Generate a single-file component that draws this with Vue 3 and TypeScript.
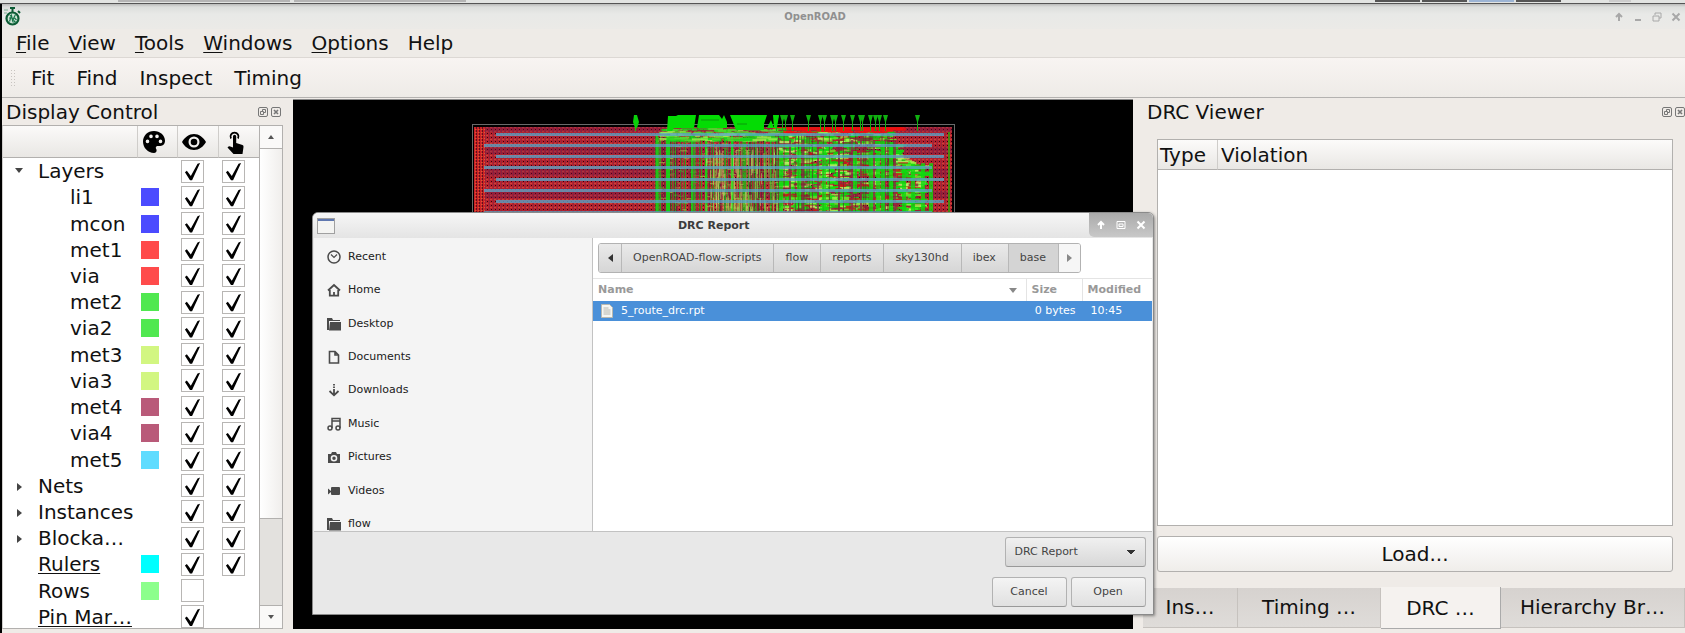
<script setup lang="ts">
import { ref } from 'vue'

interface TreeRow {
  name: string
  level: 0 | 1
  arrow?: 'open' | 'closed'
  color?: string
  underline?: boolean
  visible: boolean
  selectable?: boolean
}

const rows = ref<TreeRow[]>([
  { name: 'Layers', level: 0, arrow: 'open', visible: true, selectable: true },
  { name: 'li1', level: 1, color: '#4b4bff', visible: true, selectable: true },
  { name: 'mcon', level: 1, color: '#4b4bff', visible: true, selectable: true },
  { name: 'met1', level: 1, color: '#ff4b4b', visible: true, selectable: true },
  { name: 'via', level: 1, color: '#ff4b4b', visible: true, selectable: true },
  { name: 'met2', level: 1, color: '#50e850', visible: true, selectable: true },
  { name: 'via2', level: 1, color: '#50e850', visible: true, selectable: true },
  { name: 'met3', level: 1, color: '#d2f681', visible: true, selectable: true },
  { name: 'via3', level: 1, color: '#d2f681', visible: true, selectable: true },
  { name: 'met4', level: 1, color: '#b95a79', visible: true, selectable: true },
  { name: 'via4', level: 1, color: '#b95a79', visible: true, selectable: true },
  { name: 'met5', level: 1, color: '#5fdcff', visible: true, selectable: true },
  { name: 'Nets', level: 0, arrow: 'closed', visible: true, selectable: true },
  { name: 'Instances', level: 0, arrow: 'closed', visible: true, selectable: true },
  { name: 'Blocka…', level: 0, arrow: 'closed', visible: true, selectable: true },
  { name: 'Rulers', level: 0, color: '#00ffff', underline: true, visible: true, selectable: true },
  { name: 'Rows', level: 0, color: '#8cff8c', visible: false },
  { name: 'Pin Mar…', level: 0, underline: true, visible: true },
])

const menus = ['File', 'View', 'Tools', 'Windows', 'Options']
const tools = ['Fit', 'Find', 'Inspect', 'Timing']
const places = ['Recent', 'Home', 'Desktop', 'Documents', 'Downloads', 'Music', 'Pictures', 'Videos', 'flow']
const crumbs = ['OpenROAD-flow-scripts', 'flow', 'reports', 'sky130hd', 'ibex', 'base']
const tabs = [
  { label: 'Ins…', cls: 'w1' },
  { label: 'Timing …', cls: 'w2' },
  { label: 'DRC …', cls: 'w3' },
  { label: 'Hierarchy Br…', cls: 'w4' },
]
const activeTab = ref(2)

interface Shape { x: number; y: number; w: number; h: number; c: string; o: number }

let seed = 9157
function rnd(): number {
  seed = (seed * 16807) % 2147483647
  return seed / 2147483647
}
function pick<T>(list: T[]): T {
  return list[Math.floor(rnd() * list.length)]
}

// Routing shapes: thin vertical tracks and short horizontal segments.
const shapes: Shape[] = []
function add(x: number, y: number, w: number, h: number, c: string, o = 1) {
  shapes.push({ x, y, w, h, c, o })
}
const top = 27
const bottom = 124
// dense left block
for (let x = 362; x < 490; x += 1) {
  const r = rnd()
  if (r < 0.34) add(x, top + 4 + rnd() * 8, 1, bottom, pick(['#1f9a20', '#12c812', '#4a8a2c']), 0.75)
  else if (r < 0.5) add(x, top + 8, 1, bottom, '#5c2030', 0.7)
}
for (let i = 0; i < 420; i++) {
  add(362 + rnd() * 128, top + 3 + rnd() * 92, 2 + rnd() * 5, 1, pick(['#6f7a30', '#8a3a3a', '#a8c04a', '#4aa030', '#a84838']), 0.7)
}
for (const x of [363, 373, 375, 398, 412, 438]) add(x, top + 8, 2, bottom, '#12dc12', 0.85)
for (let i = 0; i < 140; i++) add(366 + rnd() * 118, top + 1 + rnd() * 12, 4 + rnd() * 12, 2, pick(['#58d830', '#a4ec50', '#18d818']), 0.75)
// yellow-green columns
for (let i = 0; i < 170; i++) add(412 + rnd() * 90, top + 18 + rnd() * 70, 1, 8 + rnd() * 22, pick(['#a8d850', '#c6e070', '#7ab83c']), 0.65)
// routed centre and right block, its upper corner falling away to the right
for (let i = 0; i < 1500; i++) {
  const x = 484 + rnd() * 144
  const limit = x > 605 ? 58 + (x - 605) * 0.2 : x > 595 ? 44 : 31
  const y = limit + rnd() * 84
  add(x, y, 3 + rnd() * 10, 1 + rnd() * 2, pick(['#0fe00f', '#0fe00f', '#10c810', '#10d810', '#9cf046', '#c0f068', '#66e028', '#8a2838', '#c81818']), 0.85)
}
for (const x of [496, 509, 524, 545, 558, 567, 580, 591, 601]) add(x, 40, 2, bottom, '#8c2a44', 0.8)
for (let i = 0; i < 26; i++) add(484 + rnd() * 120, 34, 1, bottom, '#6c2430', 0.7)
for (const x of [486, 504, 529, 560, 576, 583]) add(x, 36 + rnd() * 16, 4, 40 + rnd() * 30, '#10dc10', 0.75)
for (let i = 0; i < 50; i++) add(490 + rnd() * 115, 27 + rnd() * 5, 5 + rnd() * 10, 2, '#f01010', 0.8)
for (const x of [588, 596, 609, 618, 628, 636]) add(x, (x > 605 ? 60 : 40) + rnd() * 10, 4, bottom, '#0fd80f', 0.8)

const straps = Array.from({ length: 8 }, (_, i) => ({
  x: i % 2 === 0 ? 203 : 191,
  w: 448,
  y: 34 + Math.round(i * 11.15),
}))

const pins = [483, 489, 492, 499, 515, 527, 531, 539, 542, 550, 559, 567, 569, 577, 582, 586, 592, 624]
const pinBlocks = [
  'M375 16h8l2-1h18l-2 13h-20l-2 3h-5z',
  'M406 15h20l3 4 2-4 3 7v6h-30z',
  'M437 15h37l-3 9v6h-28z',
  'M474 28l4-8 3 8z',
  'M480 15h6l-2 13h-3z',
]
</script>

<template>
  <div class="desktop">
    <div class="taskbar"><i class="t1"></i><i class="t2"></i><i class="gap"></i><i class="d"></i><i class="d"></i><i class="d sel"></i><i class="d"></i><i class="end"></i></div>
    <main class="window">
      <header class="titlebar">
        <svg class="logo" width="18" height="22" viewBox="0 0 18 22" aria-hidden="true">
          <circle cx="9.500" cy="12.500" r="6" fill="#cfe4d6" stroke="#0c5c35" stroke-width="2.200" />
          <path d="M7 2h5M9.500 2v4M15 5l2 2" stroke="#0c5c35" stroke-width="2" fill="none" />
          <path d="M1 4h4M1 7h3" stroke="#7fb095" stroke-width="1" fill="none" />
          <path d="M6.500 15.500l2-6 1 5 3-6M6 12h3M9.500 16h4M11.500 12l2 2M7 9l5 7" stroke="#17764a" stroke-width="1.200" fill="none" />
        </svg>
        <h1>OpenROAD</h1>
        <div class="wm">
          <button aria-label="Shade"><svg width="10" height="10" viewBox="0 0 10 10"><path d="M5 9V2M2 5l3-3 3 3" /></svg></button>
          <button aria-label="Minimize"><svg width="10" height="10" viewBox="0 0 10 10"><path d="M2 8h6" /></svg></button>
          <button aria-label="Restore"><svg width="10" height="10" viewBox="0 0 10 10"><path d="M3 3V1h6v5H7M1 4h6v5H1z" stroke-width="1" /></svg></button>
          <button aria-label="Close"><svg width="10" height="10" viewBox="0 0 10 10"><path d="M1.500 1.500l7 7M8.500 1.500l-7 7" /></svg></button>
        </div>
      </header>
      <nav class="menubar">
        <button v-for="m in menus" :key="m"><u>{{ m[0] }}</u>{{ m.slice(1) }}</button>
        <button>Help</button>
      </nav>
      <div class="toolbar">
        <span class="grip"></span>
        <button v-for="t in tools" :key="t">{{ t }}</button>
      </div>

      <div class="work">
        <section class="dock left">
          <div class="dock-title">
            <h2>Display Control</h2>
            <button aria-label="Float Display Control"><svg width="10" height="10" viewBox="0 0 10 10"><rect x=".5" y=".5" width="9" height="9" rx="1.500" /><path d="M4.500 4.500v-2h3v3h-2M2.500 4.500h3v3h-3z" /></svg></button>
            <button aria-label="Close Display Control"><svg width="10" height="10" viewBox="0 0 10 10"><rect x=".5" y=".5" width="9" height="9" rx="1.500" /><path d="M3 3l4 4M7 3l-4 4" stroke-width="1.600" /></svg></button>
          </div>
          <div class="tree">
            <div class="tree-view">
              <table>
                <colgroup><col class="c-name" /><col class="c-color" /><col class="c-check" /><col class="c-color" /></colgroup>
                <thead>
                  <tr>
                    <th></th>
                    <th>
                      <svg width="24" height="24" viewBox="0 0 24 24" role="img" aria-label="Color"><path fill-rule="evenodd" d="M12 1C5.500 1 1 5.800 1 11.500 1 17.800 6 23 12 23c1.600 0 2.600-1.100 2.600-2.500 0-1.300-.8-1.700-.8-2.700 0-1.200.9-1.800 2.100-1.800h2.400c2.900 0 4.700-2.300 4.700-5.200C23 5.300 18 1 12 1zM5.500 13.200a1.800 1.800 0 1 1 0-3.600 1.800 1.800 0 0 1 0 3.600zM9 8.200a1.800 1.800 0 1 1 0-3.600 1.800 1.800 0 0 1 0 3.600zM15 8.200a1.800 1.800 0 1 1 0-3.600 1.800 1.800 0 0 1 0 3.600zM18.500 13.200a1.800 1.800 0 1 1 0-3.600 1.800 1.800 0 0 1 0 3.600z" /></svg>
                    </th>
                    <th>
                      <svg width="24" height="24" viewBox="0 0 24 24" role="img" aria-label="Visible"><path fill-rule="evenodd" d="M12 4C7 4 2.700 7.300 0 12c2.700 4.900 7 8 12 8s9.300-3.100 12-8c-2.700-4.700-7-8-12-8zm0 13.500a5.500 5.500 0 1 1 0-11 5.500 5.500 0 0 1 0 11z" /><circle cx="12" cy="12" r="3.300" /></svg>
                    </th>
                    <th>
                      <svg width="24" height="24" viewBox="0 0 24 24" role="img" aria-label="Selectable"><path d="M8 8.500a4 4 0 1 1 7 0" fill="none" stroke="#000" stroke-width="1.800" /><path d="M10 6.500q0-1.700 1.600-1.700t1.600 1.700V13l6.300 2q1.300.6 1 2L19.500 24H10.500L4.500 17.500q1.500-1.800 3.500-.8l2 .8z" /></svg>
                    </th>
                  </tr>
                </thead>
                <tbody>
                  <tr v-for="row in rows" :key="row.name">
                    <td :class="['name', 'l' + row.level, row.arrow]"><span :class="{ under: row.underline }">{{ row.name }}</span></td>
                    <td class="swatch"><svg v-if="row.color" width="18" height="18" viewBox="0 0 18 18" aria-hidden="true"><rect width="18" height="18" :fill="row.color" /></svg></td>
                    <td class="chk"><input v-model="row.visible" type="checkbox" :aria-label="row.name + ' visible'" /></td>
                    <td class="chk"><input v-if="row.selectable !== undefined" v-model="row.selectable" type="checkbox" :aria-label="row.name + ' selectable'" /></td>
                  </tr>
                </tbody>
              </table>
            </div>
            <div class="scrollbar">
              <button class="up" aria-label="Scroll up"></button>
              <div class="thumb"></div>
              <div class="track"></div>
              <button class="down" aria-label="Scroll down"></button>
            </div>
          </div>
        </section>

        <section class="canvas" aria-label="Layout">
          <svg viewBox="0 0 840 530" preserveAspectRatio="xMidYMin slice">
            <defs>
              <pattern id="mesh" width="4" height="4" patternUnits="userSpaceOnUse">
                <rect width="4" height="4" fill="#b8202e" />
                <rect width="1" height="4" fill="#96283c" />
                <rect x="2" y="1" width="1" height="1" fill="#30060c" />
                <rect x="1" y="3" width="2" height="1" fill="#cc4438" />
              </pattern>
              <pattern id="edge" width="3" height="3" patternUnits="userSpaceOnUse">
                <rect width="3" height="3" fill="#cc2228" />
                <rect width="1" height="2" fill="#5c141c" />
                <rect x="2" y="2" width="1" height="1" fill="#d86030" />
              </pattern>
              <pattern id="row" width="8" height="22" patternUnits="userSpaceOnUse">
                <rect y="3" width="8" height="7" fill="#60184c" opacity=".3" />
              </pattern>
            </defs>
            <rect x="179.500" y="24.500" width="482" height="440" fill="#000" stroke="#6a6a6a" stroke-width="1" />
            <rect x="181" y="27" width="478" height="436" fill="url(#mesh)" />
            <rect x="181" y="27" width="478" height="436" fill="url(#row)" />
            <rect x="181" y="27" width="11" height="436" fill="url(#edge)" />
            <rect x="480" y="27" width="130" height="3" fill="#e01414" />
            <rect v-for="(s, i) in shapes" :key="i" :x="s.x" :y="s.y" :width="s.w" :height="s.h" :fill="s.c" :opacity="s.o" />
            <rect x="655" y="32" width="2" height="430" fill="#4a8a10" />
            <rect v-for="s in straps" :key="s.y" :x="s.x" :y="s.y - 1" :width="s.w" height="3" fill="#58a8cc" opacity=".75" />
            <path v-for="p in pins" :key="p" :d="`M${p - 2} 15h5l-2 7v9h-1v-9z`" fill="#10b010" />
            <path v-for="b in pinBlocks" :key="b" :d="b" fill="#04dc04" />
            <path d="M341 15h3l2 7-2 6h-1v3h-1v-3l-2-6z" fill="#0ad00a" />
            <path d="M408 20h18M444 24h10" stroke="#0a9a0a" />
          </svg>
        </section>

        <section class="dock right">
          <div class="dock-title">
            <h2>DRC Viewer</h2>
            <button aria-label="Float DRC Viewer"><svg width="10" height="10" viewBox="0 0 10 10"><rect x=".5" y=".5" width="9" height="9" rx="1.500" /><path d="M4.500 4.500v-2h3v3h-2M2.500 4.500h3v3h-3z" /></svg></button>
            <button aria-label="Close DRC Viewer"><svg width="10" height="10" viewBox="0 0 10 10"><rect x=".5" y=".5" width="9" height="9" rx="1.500" /><path d="M3 3l4 4M7 3l-4 4" stroke-width="1.600" /></svg></button>
          </div>
          <div class="viewer">
            <div class="violations">
              <table><thead><tr><th class="type">Type</th><th>Violation</th></tr></thead></table>
            </div>
            <button class="load">Load...</button>
          </div>
          <div class="tabs" role="tablist">
            <button v-for="(t, i) in tabs" :key="t.label" role="tab" :aria-selected="i === activeTab" :class="[t.cls, { active: i === activeTab }]" @click="activeTab = i">{{ t.label }}</button>
          </div>
        </section>
      </div>
    </main>

    <div class="dialog" role="dialog" aria-labelledby="dlg-title">
      <header class="dlg-title">
        <svg width="18" height="16" viewBox="0 0 18 16" aria-hidden="true"><rect x=".5" y=".5" width="17" height="15" fill="#f4f4f2" stroke="#a0a0a0" /><rect x="1" y="1" width="16" height="2" fill="#6078b0" /></svg>
        <h2 id="dlg-title">DRC Report</h2>
        <div class="dlg-wm">
          <button aria-label="Shade dialog"><svg width="10" height="10" viewBox="0 0 10 10"><path d="M5 9V2M2 5l3-3 3 3" /></svg></button>
          <button aria-label="Maximize dialog"><svg width="10" height="10" viewBox="0 0 10 10"><path d="M1 1.500h8v7H1zM3 4h4v2.500H3z" stroke-width="1" /></svg></button>
          <button aria-label="Close dialog"><svg width="10" height="10" viewBox="0 0 10 10"><path d="M1.500 1.500l7 7M8.500 1.500l-7 7" /></svg></button>
        </div>
      </header>
      <div class="dlg-body">
        <nav class="places">
          <ul>
            <li v-for="p in places" :key="p">
              <a href="#">
                <svg width="14" height="14" viewBox="0 0 14 14" aria-hidden="true">
                  <g v-if="p === 'Recent'" fill="none" stroke="#4a4a4a"><circle cx="7" cy="7" r="6" stroke-width="1.500" /><path d="M4 4.500l3 3 3-3" stroke-width="1.200" /></g>
                  <path v-else-if="p === 'Home'" d="M1 7.500L7 2l6 5.500M2.800 7v5.700h8.400V7M7 13V9" fill="none" stroke="#4a4a4a" stroke-width="1.800" />
                  <g v-else-if="p === 'Desktop' || p === 'flow'"><path d="M0 13V1h5l1 2h7v1H2v9z" fill="#4a4a4a" /><path d="M3 5h11v8.500H2z" fill="#4a4a4a" /></g>
                  <path v-else-if="p === 'Documents'" d="M2.500 1.500h5.500l3.500 3.500v8h-9zM8 1.500V5h3.500" fill="none" stroke="#4a4a4a" stroke-width="1.600" />
                  <path v-else-if="p === 'Downloads'" d="M7 1v1.500M7 3.500V5M7 6v6M2.500 8l4.500 4.300L11.500 8" fill="none" stroke="#4a4a4a" stroke-width="1.800" />
                  <g v-else-if="p === 'Music'" fill="none" stroke="#4a4a4a" stroke-width="1.500"><path d="M5 11V1.500h8V11M5 4h8" /><circle cx="3" cy="11" r="2" /><circle cx="11" cy="11" r="2" /></g>
                  <path v-else-if="p === 'Pictures'" fill="#4a4a4a" fill-rule="evenodd" d="M1 4h3l1-2h4l1 2h3v9H1zM7 5a3.300 3.300 0 1 0 0 6.600A3.300 3.300 0 0 0 7 5zm0 1.500a1.700 1.700 0 1 1 0 3.500 1.700 1.700 0 0 1 0-3.500z" />
                  <path v-else d="M1 4.500l3 2.500V4q0-1 1-1h7q1 0 1 1v6q0 1-1 1H5q-1 0-1-1V8l-3 2.500z" fill="#4a4a4a" />
                </svg>
                <span>{{ p }}</span>
              </a>
            </li>
          </ul>
        </nav>
        <div class="files">
          <div class="path">
            <button class="back" aria-label="Back"></button>
            <button v-for="c in crumbs" :key="c" :class="{ current: c === 'base' }">{{ c }}</button>
            <button class="fwd" aria-label="Forward"></button>
          </div>
          <table>
            <colgroup><col /><col class="f-size" /><col class="f-mod" /></colgroup>
            <thead><tr><th class="sorted">Name</th><th>Size</th><th>Modified</th></tr></thead>
            <tbody>
              <tr>
                <td><span class="file"><svg width="12" height="14" viewBox="0 0 12 14" aria-hidden="true"><path d="M.5.5h8l3 3v10H.5z" fill="#f6f6f2" stroke="#b8b8b0" /><path d="M2.500 4h5M2.500 6h7M2.500 8h7M2.500 10h7" stroke="#a8a8a0" stroke-width=".8" /></svg>5_route_drc.rpt</span></td>
                <td class="num">0 bytes</td>
                <td>10:45</td>
              </tr>
            </tbody>
          </table>
        </div>
      </div>
      <footer class="dlg-foot">
        <select aria-label="File type"><option>DRC Report</option></select>
        <div class="actions"><button>Cancel</button><button>Open</button></div>
      </footer>
    </div>
  </div>
</template>

<style>
body { margin: 0; background: #000; }
</style>

<style scoped>
* { box-sizing: border-box; }
button, select, input { font: inherit; color: inherit; margin: 0; padding: 0; border: 0; background: none; }
h1, h2, ul { margin: 0; padding: 0; font: inherit; }
ul { list-style: none; }
svg { display: block; }
table { border-collapse: separate; border-spacing: 0; table-layout: fixed; width: 100%; }
th, td { padding: 0; font-weight: inherit; text-align: left; }

.desktop { position: relative; height: 100vh; min-height: 480px; overflow: hidden; display: flex; flex-direction: column; background: #000; font: 20px/24px "DejaVu Sans", sans-serif; color: #111; }
.taskbar { display: flex; flex: none; height: 4px; background: #e2e4e2; border-bottom: 1px solid #555; }
.taskbar i { height: 2px; }
.t1 { width: 172px; margin-left: 118px; background: #b4b4b4; }
.t2 { width: 172px; margin-left: 4px; background: #b4b4b4; }
.gap { flex: 1; }
.d { width: 45px; margin-right: 2px; background: #555; }
.d.sel { background: #9cb4d4; }
.end { width: 22px; margin-left: 46px; margin-right: 54px; background: #ccc; }

.window { flex: 1; min-height: 0; margin-left: 2px; display: flex; flex-direction: column; background: #efebe7; }
.titlebar { flex: none; height: 25px; display: grid; grid-template-columns: 80px 1fr 80px; align-items: center; padding: 0 2px 0 1px; background: linear-gradient(#b9bab9, #dcdedc 3px, #e8e9e7 10px, #ebeae7); }
.titlebar h1 { text-align: center; font-size: 10px; line-height: 16px; font-weight: bold; color: #909090; margin-right: 56px; }
.wm { display: flex; justify-content: space-between; padding: 0 2px 0 11px; }
.wm svg, .dlg-wm svg { fill: none; stroke: #a8a8a8; stroke-width: 2; }

.menubar { flex: none; height: 29px; padding-left: 5px; display: flex; gap: 1px; align-items: center; background: #eeebe7; border-bottom: 1px solid #dcd8d4; }
.menubar button { padding: 0 9px; }
u, .under { text-decoration: underline; text-decoration-thickness: 1px; text-underline-offset: 2px; }
.toolbar { flex: none; height: 40px; display: flex; gap: 2px; align-items: center; background: linear-gradient(#f8f4f2, #eeebe7); border-bottom: 1px solid #b4b2b0; }
.grip { width: 5px; height: 18px; margin: 0 4px 0 8px; background: radial-gradient(circle, #c8c4c0 1px, transparent 1px) 0 0 / 3px 3px; }
.toolbar button { padding: 0 10px; }

.work { flex: 1; min-height: 0; display: flex; padding: 1px 0 4px; }
.dock { flex: none; display: flex; flex-direction: column; }
.left { width: 291px; padding-right: 10px; }
.right { width: 552px; padding-left: 10px; }
.dock-title { flex: none; height: 26px; display: flex; align-items: center; gap: 3px; padding-left: 4px; }
.dock-title h2 { flex: 1; }
.dock-title svg { fill: none; stroke: #777; stroke-width: 1; }
.left .dock-title { padding-right: 2px; }

.tree { flex: 1; min-height: 0; display: flex; border: 1px solid #b2b0ae; border-left-color: #d0cecc; background: #fff; }
.tree-view { flex: 1; min-width: 0; overflow: hidden; }
.tree table { height: calc(100% + 2px); }
.c-color { width: 40px; }
.c-check { width: 41px; }
.tree thead tr { height: 32px; }
.tree th { border-bottom: 1px solid #b2b0ae; border-right: 1px solid #cfcdca; background: linear-gradient(#fbfaf9, #e9e7e4); }
.tree th:last-child { border-right: 0; }
.tree th svg { margin-left: 4px; }
.tree td { line-height: 24px; white-space: nowrap; overflow: hidden; }
.name { position: relative; }
.l0 { padding-left: 35px; }
.l1 { padding-left: 67px; }
.open::before, .closed::before { content: ""; position: absolute; left: 12px; top: 10px; border: 4px solid transparent; }
.open::before { border-top: 5px solid #444; border-bottom: 0; }
.closed::before { left: 14px; border-left: 5px solid #444; border-right: 0; }
.swatch { padding-left: 3px; }
.chk { padding-left: 3px; line-height: 0; }
input { appearance: none; display: block; width: 23px; height: 23px; border: 1px solid #b8b6b4; background: #fff; }
input:checked::before { content: ""; display: block; width: 100%; height: 100%; background: #000; clip-path: polygon(14% 55%, 23% 48%, 42% 73%, 74% 15%, 86% 11%, 48% 93%, 38% 93%); }

.scrollbar { flex: none; width: 23px; display: flex; flex-direction: column; border-left: 1px solid #b2b0ae; }
.scrollbar button { flex: none; height: 22px; display: grid; place-items: center; background: #faf9f8; }
.scrollbar button::before { content: ""; border: 3px solid transparent; }
.scrollbar .up::before { border-bottom: 4px solid #555; border-top: 0; }
.scrollbar .down::before { border-top: 4px solid #555; border-bottom: 0; }
.thumb { flex: 371; border: solid #b2b0ae; border-width: 1px 0; background: linear-gradient(90deg, #fff, #f0eeec); }
.track { flex: 87; background: #e3e1de; border-bottom: 1px solid #b2b0ae; }

.canvas { flex: 1; min-width: 0; overflow: hidden; background: #000; border-top: 1px solid #888; }
.canvas svg { width: 100%; height: 100%; }

.viewer { flex: 1; min-height: 0; display: flex; flex-direction: column; gap: 10px; padding: 14px 12px 0 14px; }
.violations { flex: 1; min-height: 0; border: 1px solid #b2b0ae; background: #fff; }
.violations th { height: 30px; padding-left: 3px; border-bottom: 1px solid #b2b0ae; background: linear-gradient(#fcfbfa, #e9e7e4); }
.violations .type { width: 60px; border-right: 1px solid #cfcdca; padding-left: 2px; }
.load { flex: none; height: 36px; border: 1px solid #b2b0ae; border-radius: 3px; background: linear-gradient(#fff, #efedea); }
.tabs { flex: none; display: flex; height: 42px; margin-top: 15px; }
.tabs button { height: 40px; margin-top: 1px; padding-bottom: 2px; background: linear-gradient(#d6d2cf, #dfdcd9); border-right: 1px solid #c6c2be; border-bottom: 1px solid #c6c2be; white-space: nowrap; overflow: hidden; }
.tabs .active { height: 42px; margin-top: 0; padding: 0; background: #f5f2ef; border-right-color: #aaa; border-bottom-color: #aaa; }
.w1 { width: 95px; }
.w2 { width: 143px; }
.w3 { width: 120px; }
.w4 { flex: 1; }

.dialog { position: absolute; left: 312px; top: 212px; bottom: 18px; width: calc(50% - 1px); display: flex; flex-direction: column; border: 1px solid #8a8a8a; border-radius: 6px 6px 0 0; overflow: hidden; background: #e8e8e8; box-shadow: 1px 1px 3px #0006; font-size: 11px; line-height: 16px; color: #2e3436; }
.dlg-title { flex: none; height: 25px; display: grid; grid-template-columns: 64px 1fr 64px; align-items: center; background: linear-gradient(#f6f6f6, #e4e4e4); }
.dlg-title > svg { margin-left: 4px; }
.dlg-title h2 { text-align: center; font-weight: bold; margin-right: 38px; color: #3c3c3c; }
.dlg-wm { height: 24px; align-self: start; display: flex; align-items: center; justify-content: space-between; padding: 0 7px; border-radius: 0 0 0 5px; background: linear-gradient(#aaa, #c8c8c8); }
.dlg-wm svg { stroke: #fff; }
.dlg-body { flex: 1; min-height: 0; display: flex; margin: 0 1px; border-bottom: 1px solid #c2c2c2; }
.places { flex: none; width: 279px; overflow: hidden; background: #f4f4f4; border-right: 1px solid #c2c2c2; padding-top: 2px; }
.places ul { height: calc(100% + 10px); display: flex; flex-direction: column; }
.places li { flex: 1; display: flex; }
.places a { flex: 1; display: flex; align-items: center; gap: 7px; padding-left: 13px; color: #202020; text-decoration: none; }
.files { flex: 1; min-width: 0; background: #fff; }
.path { display: flex; margin: 5px 5px; height: 30px; width: max-content; border: 1px solid #b2b2b2; border-radius: 3px; overflow: hidden; }
.path button { padding: 0 12px 0 11px; border-right: 1px solid #b8b8b8; background: linear-gradient(#eaeaea, #d6d6d6); color: #444; }
.path .current { background: #d4d4d4; }
.path .back, .path .fwd { width: 23px; display: grid; place-items: center; padding: 0; }
.path .fwd { background: #f6f6f6; border-right: 0; width: 21px; }
.back::before, .fwd::before { content: ""; border: 4px solid transparent; }
.back::before { border-right: 5px solid #333; border-left: 0; }
.fwd::before { border-left: 5px solid #888; border-right: 0; }
.f-size { width: 56px; }
.f-mod { width: 69px; }
.files th { height: 23px; padding-left: 5px; border-top: 1px solid #e4e4e4; border-right: 1px solid #e4e4e4; font-weight: bold; color: #999; }
.files th:last-child { border-right: 0; }
.files .sorted { position: relative; }
.sorted::after { content: ""; position: absolute; right: 9px; top: 9px; border: 4px solid transparent; border-top: 5px solid #888; border-bottom: 0; }
.files td { height: 20px; background: #4a90d9; color: #fff; padding-left: 8px; }
.files .num { text-align: right; padding: 0 7px 0 0; }
.file { display: flex; align-items: center; gap: 8px; }
.dlg-foot { flex: none; padding: 5px 7px 7px; display: flex; flex-direction: column; align-items: flex-end; gap: 10px; }
.dlg-foot button, .dlg-foot select { height: 30px; border: 1px solid #b2b2b2; border-bottom-color: #999; border-radius: 3px; background: linear-gradient(#f0f0f0, #d8d8d8); color: #444; }
.dlg-foot select { appearance: none; width: 141px; padding-left: 9px; background: linear-gradient(to bottom right, #333 50%, transparent 50%) 125px 12px / 4px 5px no-repeat, linear-gradient(to bottom left, #333 50%, transparent 50%) 121px 12px / 4px 5px no-repeat, linear-gradient(#f0f0f0, #d8d8d8); }
.actions { display: flex; gap: 4px; }
.actions button { width: 75px; background: linear-gradient(#f4f4f4, #e0e0e0); }
</style>
